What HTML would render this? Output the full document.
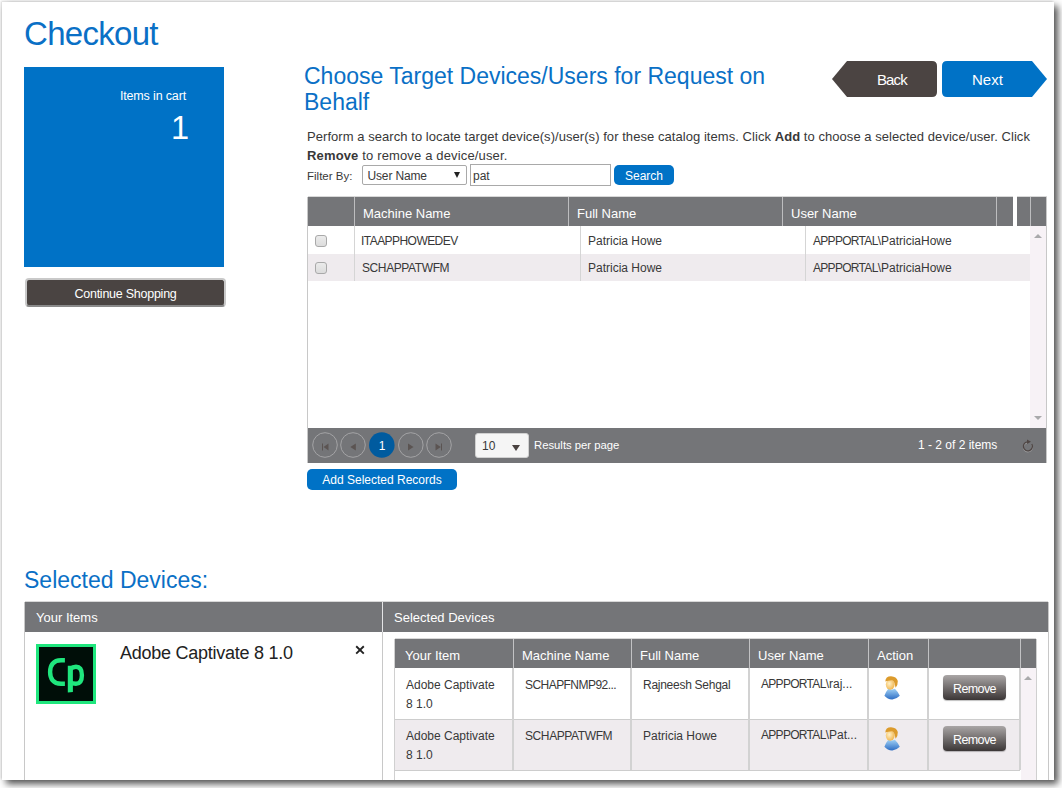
<!DOCTYPE html>
<html><head><meta charset="utf-8">
<style>
*{box-sizing:border-box;margin:0;padding:0}
html,body{width:1062px;height:788px;overflow:hidden;background:#fff}
body{font-family:"Liberation Sans",sans-serif;position:relative;color:#383838}
.abs{position:absolute}
.nw{white-space:nowrap}
#page{position:absolute;left:2px;top:2px;width:1052px;height:778px;background:#fff;box-shadow:-1px -1px 2px rgba(0,0,0,.15), 4px 4px 7px rgba(0,0,0,.68)}
.shadowR{position:absolute;left:1054px;top:4px;width:8px;height:784px;background:linear-gradient(to right,#707070,#fff)}
.shadowB{position:absolute;left:4px;top:780px;width:1058px;height:8px;background:linear-gradient(to bottom,#707070,#fff)}
.title{color:#0a70c6;font-weight:normal}
.wt{color:#fff}
.gh{background:#747578;color:#fff}
.cb{position:absolute;width:12px;height:12px;border:1px solid #a9a9a9;border-radius:3px;background:linear-gradient(#ebebeb,#dcdcdc)}
.circ{position:absolute;top:432px;width:25px;height:25px;border-radius:50%;border:1px solid #8f8f92}
.rm{width:63px;height:25px;border-radius:4px;background:linear-gradient(#aaa6a6,#3b3636);font-size:12.5px;letter-spacing:-0.6px;line-height:28px;text-align:center;box-shadow:0 1px 1px rgba(0,0,0,.25)}
</style></head>
<body>
<div id="page"></div>

<!-- LEFT -->
<div class="abs title nw" style="left:24px;top:15px;font-size:33px;letter-spacing:-0.7px">Checkout</div>
<div class="abs" style="left:24px;top:67px;width:200px;height:200px;background:#0072c6">
  <div class="abs wt nw" style="right:38px;top:22px;font-size:12.5px;letter-spacing:-0.15px">Items in cart</div>
  <div class="abs wt nw" style="right:35px;top:43px;font-size:32.5px">1</div>
</div>
<div class="abs wt nw" style="left:25px;top:278px;width:201px;height:29px;border:2px solid #c9c9c9;border-bottom-color:#8a8a8a;border-radius:4px;background:#4a4442;font-size:12.5px;letter-spacing:-0.25px;text-align:center;line-height:28px">Continue Shopping</div>

<!-- RIGHT HEADER -->
<div class="abs title" style="left:304px;top:63px;width:520px;font-size:23px;line-height:26px">Choose Target Devices/Users for Request on Behalf</div>

<svg class="abs" style="left:832px;top:61px" width="216" height="37" viewBox="0 0 216 37">
  <path d="M15 0 H100 Q105 0 105 5 V31 Q105 36 100 36 H15 L0 18 Z" fill="#4b4442"/>
  <path d="M115 0 H200 L215 18 L200 36 H115 Q110 36 110 31 V5 Q110 0 115 0 Z" fill="#0072c6"/>
</svg>
<div class="abs wt nw" style="left:877px;top:71px;font-size:15px;letter-spacing:-0.9px">Back</div>
<div class="abs wt nw" style="left:972px;top:71px;font-size:15px">Next</div>

<div class="abs nw" style="left:307px;top:128px;font-size:13px;line-height:18px;letter-spacing:0.055px;color:#383838">Perform a search to locate target device(s)/user(s) for these catalog items. Click <b>Add</b> to choose a selected device/user. Click</div>
<div class="abs nw" style="left:307px;top:147px;font-size:13px;line-height:18px;letter-spacing:0.15px;color:#383838"><b>Remove</b> to remove a device/user.</div>

<div class="abs nw" style="left:307px;top:170px;font-size:11.5px;color:#383838">Filter By:</div>
<div class="abs nw" style="left:362px;top:165px;width:105px;height:20px;border:1px solid #a9a9a9;border-radius:2px;background:#fff;font-size:12px;line-height:21px;padding-left:4.5px;letter-spacing:-0.15px;color:#383838">User Name</div>
<div class="abs" style="left:454px;top:171.5px;width:0;height:0;border-left:3.2px solid transparent;border-right:3.2px solid transparent;border-top:6.3px solid #222"></div>
<div class="abs nw" style="left:470px;top:164px;width:141px;height:22px;border:1px solid #a9a9a9;background:#fff;font-size:12px;line-height:23px;padding-left:2px;color:#383838">pat</div>
<div class="abs wt nw" style="left:614px;top:165px;width:60px;height:20px;border-radius:5px;background:#0072c6;font-size:12px;line-height:22px;text-align:center">Search</div>

<!-- GRID -->
<div class="abs" style="left:307px;top:197px;width:740px;height:266px;border:1px solid #c8c8c8;border-top:none;background:#fff"></div>
<div class="abs" style="left:308px;top:196px;width:705px;height:1px;background:#d8d8d8"></div>
<div class="abs" style="left:1017px;top:196px;width:30px;height:1px;background:#d8d8d8"></div>
<div class="abs gh" style="left:308px;top:197px;width:705px;height:29px"></div>
<div class="abs gh" style="left:1017px;top:197px;width:29px;height:29px"></div>
<div class="abs" style="left:354px;top:197px;width:1px;height:29px;background:#bdbdbf"></div>
<div class="abs" style="left:568px;top:197px;width:1px;height:29px;background:#bdbdbf"></div>
<div class="abs" style="left:782px;top:197px;width:1px;height:29px;background:#bdbdbf"></div>
<div class="abs" style="left:996px;top:197px;width:1px;height:29px;background:#bdbdbf"></div>
<div class="abs" style="left:1030px;top:197px;width:1px;height:29px;background:#bdbdbf"></div>
<div class="abs wt nw" style="left:363px;top:206px;font-size:13px">Machine Name</div>
<div class="abs wt nw" style="left:577px;top:206px;font-size:13px">Full Name</div>
<div class="abs wt nw" style="left:791px;top:206px;font-size:13px">User Name</div>

<!-- scrollbar -->
<div class="abs" style="left:1030px;top:226px;width:16px;height:202px;background:#f7f2f6"></div>
<div class="abs" style="left:1034px;top:234px;width:0;height:0;border-left:4px solid transparent;border-right:4px solid transparent;border-bottom:4px solid #a9a9ab"></div>
<div class="abs" style="left:1034px;top:416px;width:0;height:0;border-left:4px solid transparent;border-right:4px solid transparent;border-top:4px solid #a9a9ab"></div>

<!-- rows -->
<div class="abs" style="left:308px;top:254px;width:722px;height:27px;background:#efebee"></div>
<div class="abs" style="left:354px;top:226px;width:1px;height:55px;background:#d5d5d5"></div>
<div class="abs" style="left:580px;top:226px;width:1px;height:55px;background:#d5d5d5"></div>
<div class="abs" style="left:805px;top:226px;width:1px;height:55px;background:#d5d5d5"></div>
<div class="cb" style="left:315px;top:235px"></div>
<div class="cb" style="left:315px;top:262px"></div>
<div class="abs nw" style="left:361px;top:234px;font-size:12px;letter-spacing:-0.55px;color:#383838">ITAAPPHOWEDEV</div>
<div class="abs nw" style="left:588px;top:234px;font-size:12px;color:#383838">Patricia Howe</div>
<div class="abs nw" style="left:813px;top:234px;font-size:12px;color:#383838"><span style="letter-spacing:-0.7px">APPPORTAL</span>\PatriciaHowe</div>
<div class="abs nw" style="left:362px;top:261px;font-size:12px;letter-spacing:-0.4px;color:#383838">SCHAPPATWFM</div>
<div class="abs nw" style="left:588px;top:261px;font-size:12px;color:#383838">Patricia Howe</div>
<div class="abs nw" style="left:813px;top:261px;font-size:12px;color:#383838"><span style="letter-spacing:-0.7px">APPPORTAL</span>\PatriciaHowe</div>

<!-- pager -->
<div class="abs gh" style="left:308px;top:428px;width:738px;height:35px"></div>
<svg class="abs" style="left:308px;top:428px" width="160" height="35" viewBox="0 0 160 35">
  <g fill="none" stroke="#a3a3a5" stroke-width="1">
    <circle cx="17" cy="17" r="12.3"/>
    <circle cx="45" cy="17" r="12.3"/>
    <circle cx="102.8" cy="17" r="12.3"/>
    <circle cx="131" cy="17" r="12.3"/>
  </g>
  <circle cx="73.8" cy="17" r="12.8" fill="#005b9f"/>
  <g fill="#5b5452">
    <rect x="14" y="15.5" width="1" height="7"/>
    <path d="M15.5 19 L20.5 15.5 V22.5 Z"/>
    <path d="M42.3 19 L47.8 15.5 V22.5 Z"/>
    <path d="M105.5 19 L100 15.5 V22.5 Z"/>
    <path d="M132.8 19 L127.5 15.5 V22.5 Z"/>
    <rect x="133" y="15.5" width="1" height="7"/>
  </g>
</svg>
<div class="abs wt nw" style="left:369.5px;top:439px;width:25px;text-align:center;font-size:12px">1</div>
<div class="abs" style="left:475px;top:433px;width:54px;height:25px;border-radius:3px;background:#f5f5f5;border:1px solid #d0d0d0"></div>
<div class="abs nw" style="left:482px;top:439px;font-size:12px;color:#383838">10</div>
<div class="abs" style="left:512px;top:445px;width:0;height:0;border-left:4px solid transparent;border-right:4px solid transparent;border-top:6px solid #4a4240"></div>
<div class="abs wt nw" style="left:534px;top:439px;font-size:11.3px">Results per page</div>
<div class="abs wt nw" style="left:918px;top:438px;font-size:12px">1 - 2 of 2 items</div>
<svg class="abs" style="left:1018px;top:437px" width="20" height="20" viewBox="0 0 20 20">
  <path d="M13.8 8.05 A4.5 4.5 0 1 1 9.9 5.8" fill="none" stroke="#9a9a9c" stroke-width="1.2"/>
  <path d="M13.8 7.05 A4.5 4.5 0 1 1 9.9 4.8" fill="none" stroke="#4f4644" stroke-width="1.3"/>
  <path d="M9 2.6 L13 4.8 L9 7 Z" fill="#4f4644"/>
</svg>

<div class="abs wt nw" style="left:307px;top:469px;width:150px;height:21px;border-radius:5px;background:#0072c6;font-size:12px;line-height:23px;text-align:center">Add Selected Records</div>

<!-- SELECTED DEVICES -->
<div class="abs title nw" style="left:24px;top:566.5px;font-size:23px">Selected Devices:</div>
<div class="abs" style="left:24px;top:602px;width:1025px;height:178px;border:1px solid #c8c8c8;border-bottom:none;background:#fff"></div>
<div class="abs gh" style="left:25px;top:602px;width:1023px;height:30px"></div>
<div class="abs" style="left:382px;top:632px;width:1px;height:148px;background:#c8c8c8"></div>
<div class="abs" style="left:382px;top:602px;width:1px;height:30px;background:#e4e4e6"></div>
<div class="abs" style="left:25px;top:601px;width:1023px;height:1px;background:#d8d8d8"></div>
<div class="abs wt nw" style="left:36px;top:610px;font-size:13px">Your Items</div>
<div class="abs wt nw" style="left:394px;top:610px;font-size:13px">Selected Devices</div>

<svg class="abs" style="left:36px;top:644px" width="60" height="60" viewBox="0 0 60 60">
  <rect x="1.5" y="1.5" width="57" height="57" fill="#000e08" stroke="#1fe67d" stroke-width="3"/>
  <g fill="none" stroke="#1fe67d" stroke-width="4.4">
    <path d="M28.9 16.3 L25 16.3 C17 16.3 14.1 21.5 14.1 28 C14.1 34.5 17 39.7 25 39.7 L28.9 39.7"/>
    <path d="M34.3 25 Q37 22.8 40 22.8 Q45.9 22.8 45.9 31.2 Q45.9 39.7 40 39.7 Q36.5 39.7 34.3 38.5"/>
  </g>
  <path d="M31.8 21.7 H36.9 V48 L31.8 48.5 Z" fill="#1fe67d"/>
</svg>
<div class="abs nw" style="left:120px;top:643px;font-size:18px;letter-spacing:-0.25px;color:#222">Adobe Captivate 8 1.0</div>
<svg class="abs" style="left:350px;top:640px" width="20" height="20"><path d="M6.2 6.2 L13.8 13.6 M13.8 6.2 L6.2 13.6" stroke="#222" stroke-width="1.9"/></svg>


<!-- inner selected table -->
<div class="abs" style="left:394px;top:639px;width:643px;height:141px;background:#fff;border-left:1px solid #d0d0d0;border-right:1px solid #d0d0d0"></div>
<div class="abs" style="left:395px;top:638px;width:641px;height:1px;background:#d8d8d8"></div>
<div class="abs gh" style="left:395px;top:639px;width:641px;height:29px"></div>
<div class="abs" style="left:1021px;top:668px;width:15px;height:112px;background:#f7f2f6"></div>
<div class="abs" style="left:1024px;top:676px;width:0;height:0;border-left:4px solid transparent;border-right:4px solid transparent;border-bottom:4px solid #a9a9ab"></div>
<div class="abs" style="left:395px;top:720px;width:625px;height:50px;background:#efebee"></div>
<div class="abs" style="left:395px;top:719px;width:625px;height:1px;background:#cdcdcd"></div>
<div class="abs" style="left:395px;top:770px;width:625px;height:1px;background:#cdcdcd"></div>
<div class="abs" style="left:513px;top:639px;width:1px;height:29px;background:#c2c2c4"></div>
<div class="abs" style="left:512px;top:668px;width:2px;height:102px;background:#d2d2d2"></div>
<div class="abs" style="left:631px;top:639px;width:1px;height:29px;background:#c2c2c4"></div>
<div class="abs" style="left:630px;top:668px;width:2px;height:102px;background:#d2d2d2"></div>
<div class="abs" style="left:749px;top:639px;width:1px;height:29px;background:#c2c2c4"></div>
<div class="abs" style="left:748px;top:668px;width:2px;height:102px;background:#d2d2d2"></div>
<div class="abs" style="left:868px;top:639px;width:1px;height:29px;background:#c2c2c4"></div>
<div class="abs" style="left:867px;top:668px;width:2px;height:102px;background:#d2d2d2"></div>
<div class="abs" style="left:928px;top:639px;width:1px;height:29px;background:#c2c2c4"></div>
<div class="abs" style="left:927px;top:668px;width:2px;height:102px;background:#d2d2d2"></div>
<div class="abs" style="left:1020px;top:639px;width:1px;height:29px;background:#c2c2c4"></div>
<div class="abs" style="left:1019px;top:668px;width:2px;height:102px;background:#d2d2d2"></div>
<div class="abs wt nw" style="left:405px;top:648px;font-size:13px">Your Item</div>
<div class="abs wt nw" style="left:522px;top:648px;font-size:13px">Machine Name</div>
<div class="abs wt nw" style="left:640px;top:648px;font-size:13px">Full Name</div>
<div class="abs wt nw" style="left:758px;top:648px;font-size:13px">User Name</div>
<div class="abs wt nw" style="left:877px;top:648px;font-size:13px">Action</div>

<div class="abs" style="left:406px;top:676px;font-size:12px;line-height:19.1px;color:#383838">Adobe Captivate<br>8 1.0</div>
<div class="abs nw" style="left:525px;top:678px;font-size:12px;letter-spacing:-0.55px;color:#383838">SCHAPFNMP92...</div>
<div class="abs nw" style="left:643px;top:678px;font-size:12px;letter-spacing:-0.27px;color:#383838">Rajneesh Sehgal</div>
<div class="abs nw" style="left:761px;top:677px;font-size:12px;color:#383838"><span style="letter-spacing:-0.7px">APPPORTAL</span>\raj...</div>
<div class="abs" style="left:406px;top:727px;font-size:12px;line-height:19.1px;color:#383838">Adobe Captivate<br>8 1.0</div>
<div class="abs nw" style="left:525px;top:729px;font-size:12px;letter-spacing:-0.4px;color:#383838">SCHAPPATWFM</div>
<div class="abs nw" style="left:643px;top:729px;font-size:12px;color:#383838">Patricia Howe</div>
<div class="abs nw" style="left:761px;top:728px;font-size:12px;color:#383838"><span style="letter-spacing:-0.7px">APPPORTAL</span>\Pat...</div>

<svg class="abs" style="left:878px;top:670px" width="28" height="35" viewBox="0 0 28 35">
  <defs>
   <linearGradient id="bd1" x1="0" y1="0" x2="0" y2="1"><stop offset="0" stop-color="#9fd0f5"/><stop offset="1" stop-color="#2f6ec4"/></linearGradient>
   <radialGradient id="fc1" cx="0.4" cy="0.4" r="0.7"><stop offset="0" stop-color="#fff0c8"/><stop offset="1" stop-color="#f0b040"/></radialGradient>
  </defs>
  <path d="M10.3 18.8 Q13.6 20 16.9 18.8 Q19.8 21.5 21.8 25.8 Q18 29.6 14 29.4 Q9.5 29.4 6.4 25.8 Q8 21.5 10.3 18.8 Z" fill="url(#bd1)"/>
  <ellipse cx="12.2" cy="14.6" rx="4.4" ry="5.1" fill="url(#fc1)"/>
  <path d="M7.3 11.5 Q7.5 6.2 13 6.2 Q18.5 6.5 19.8 11 Q20 15 17.6 17.8 Q17 14 16 12 Q15 10 13.5 10.3 Q10 10.8 7.3 11.5 Z" fill="#dc9b2c"/>
</svg>
<svg class="abs" style="left:878px;top:721px" width="28" height="35" viewBox="0 0 28 35">
  <defs>
   <linearGradient id="bd2" x1="0" y1="0" x2="0" y2="1"><stop offset="0" stop-color="#9fd0f5"/><stop offset="1" stop-color="#2f6ec4"/></linearGradient>
   <radialGradient id="fc2" cx="0.4" cy="0.4" r="0.7"><stop offset="0" stop-color="#fff0c8"/><stop offset="1" stop-color="#f0b040"/></radialGradient>
  </defs>
  <path d="M10.3 18.8 Q13.6 20 16.9 18.8 Q19.8 21.5 21.8 25.8 Q18 29.6 14 29.4 Q9.5 29.4 6.4 25.8 Q8 21.5 10.3 18.8 Z" fill="url(#bd2)"/>
  <ellipse cx="12.2" cy="14.6" rx="4.4" ry="5.1" fill="url(#fc2)"/>
  <path d="M7.3 11.5 Q7.5 6.2 13 6.2 Q18.5 6.5 19.8 11 Q20 15 17.6 17.8 Q17 14 16 12 Q15 10 13.5 10.3 Q10 10.8 7.3 11.5 Z" fill="#dc9b2c"/>
</svg>
<div class="abs wt nw rm" style="left:943px;top:675px">Remove</div>
<div class="abs wt nw rm" style="left:943px;top:726px">Remove</div>
</body></html>
